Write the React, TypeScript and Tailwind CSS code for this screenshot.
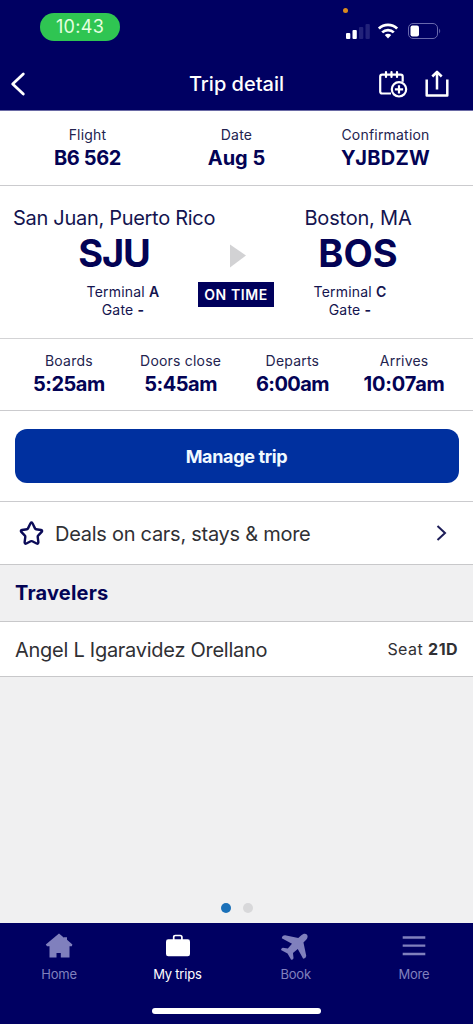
import React from 'react';

interface LabelledValue {
  label: string;
  value: string;
  valueClass: string;
}

const flightInfo: LabelledValue[] = [
  { label: 'Flight', value: 'B6 562', valueClass: 'tracking-[-0.4px]' },
  { label: 'Date', value: 'Aug 5', valueClass: 'tracking-[0px]' },
  { label: 'Confirmation', value: 'YJBDZW', valueClass: 'tracking-[0.3px]' },
];

const times: LabelledValue[] = [
  { label: 'Boards', value: '5:25am', valueClass: 'tracking-[-0.5px]' },
  { label: 'Doors close', value: '5:45am', valueClass: 'tracking-[-0.5px]' },
  { label: 'Departs', value: '6:00am', valueClass: 'tracking-[-0.6px]' },
  { label: 'Arrives', value: '10:07am', valueClass: 'tracking-[-0.2px]' },
];

const HomeIcon = () => (
  <svg width="28" height="26" viewBox="0 0 28 26" fill="currentColor">
    <path d="M14 .5 .8 11.500 2 13.200h2.500v11.300H11.500V20h4.300v4.500h8.700V13.200h2.300l.6-1.700L22 6.800V4.200h-3v.5z" />
  </svg>
);

const SuitcaseIcon = () => (
  <svg className="ml-px" width="28" height="26" viewBox="0 0 28 26">
    <path d="M9.700 7V4.200q0-1.700 1.700-1.700h4.800q1.700 0 1.700 1.700V7" fill="none" stroke="currentColor" strokeWidth="1.700" />
    <rect x="2" y="6.300" width="24" height="17" rx="2.300" fill="currentColor" />
  </svg>
);

const PlaneIcon = () => (
  <svg className="mr-[3px] mt-px" width="27" height="27" viewBox="0 0 28 28" fill="currentColor">
    <path d="M26.800 1.500c-1.700-1.400-4.200-.6-5.700.9l-3.200 2.900L4.200 2.300Q1.200 2.500.8 5.500l10.600 5.700-4.300 5-5.200-.9Q.2 15.500 0 17.500l6.800 3.700 3.700 6.600q2 0 2.500-1.700l-.6-5.400 5-4.200 5.600 10.300q2.700-.2 3.200-3L23.300 9.800l2.800-2.900c1.500-1.500 2.100-4 .7-5.400z" />
  </svg>
);

const MenuIcon = () => (
  <svg width="24" height="22" viewBox="0 0 24 22" stroke="currentColor" strokeWidth="2.300">
    <path d="M.7 2.500h22.600M.7 10.700h22.600M.7 19h22.600" />
  </svg>
);

const tabs = [
  { name: 'Home', icon: HomeIcon, active: false },
  { name: 'My trips', icon: SuitcaseIcon, active: true },
  { name: 'Book', icon: PlaneIcon, active: false },
  { name: 'More', icon: MenuIcon, active: false },
];

const StatusBar = () => (
  <div className="relative flex h-14 items-start justify-between pl-10 pr-8">
    <div className="mt-[13px] flex h-7 w-20 items-center justify-center rounded-full bg-[#2fc552] text-[18px] leading-7 tracking-[0.3px] text-[#e6ffe0]">
      10:43
    </div>
    <span className="absolute left-[343px] top-2 h-[5px] w-[5px] rounded-full bg-[#d98a1e]" />
    <div className="mt-[22px] flex items-center">
      <svg className="mr-2" width="25" height="18" viewBox="0 0 25 18">
        <rect x="1" y="11" width="4.300" height="6" rx="1" fill="#fff" />
        <rect x="7.500" y="8" width="4.300" height="9" rx="1" fill="#fff" />
        <rect x="14" y="5" width="4.300" height="12" rx="1" fill="#22227a" />
        <rect x="20.500" y="2" width="4.300" height="15" rx="1" fill="#22227a" />
      </svg>
      <svg className="mr-2.5" width="20" height="16" viewBox="0 0 20 16" fill="none" stroke="#fff" strokeWidth="2.700">
        <path d="M.9 5.600a13 13 0 0 1 18.200 0" />
        <path d="M4.200 9.400a8.300 8.300 0 0 1 11.600 0" />
        <path d="M10 15.400 6.800 12q3.200-2.600 6.400 0z" fill="#fff" stroke="none" />
      </svg>
      <svg width="33" height="16" viewBox="0 0 33 16">
        <rect x=".5" y=".5" width="29" height="15" rx="4.500" fill="none" stroke="#6868ac" />
        <rect x="2.500" y="2.500" width="8.500" height="11" rx="2" fill="#fff" />
        <path d="M31.200 5.500q2 2.500 0 5z" fill="#6868ac" />
      </svg>
    </div>
  </div>
);

const TitleBar = () => (
  <div className="grid h-[54px] grid-cols-[1fr_auto_1fr] items-center pl-2.5 pr-6 pt-px text-white">
    <svg width="16" height="24" viewBox="0 0 16 24" fill="none" stroke="currentColor" strokeWidth="2.800" strokeLinecap="round" strokeLinejoin="round">
      <path d="M13.300 2 2.700 12l10.600 10" />
    </svg>
    <h1 className="pl-3.5 pt-px text-[20px] font-medium leading-7">Trip detail</h1>
    <div className="flex items-center justify-end gap-[17px]">
      <svg width="30" height="28" viewBox="0 0 30 28" fill="none" stroke="currentColor" strokeWidth="2.200">
        <path d="M13 23.500H4.200q-2 0-2-2V6.700q0-2 2-2h18.500q2 0 2 2v5" />
        <path d="M8 2v5M13.500 2v5M19 2v5" strokeLinecap="round" />
        <circle cx="21" cy="19.300" r="7.200" />
        <path d="M21 15.200v8.200M16.900 19.300h8.200" />
      </svg>
      <svg width="24" height="28" viewBox="0 0 24 28" fill="none" stroke="currentColor" strokeWidth="2.500" strokeLinejoin="round">
        <path d="M1.700 9.500v16h20.600v-16" />
        <path d="M12 19.500V2M7.300 6.500 12 1.800l4.700 4.700" />
      </svg>
    </div>
  </div>
);

const InfoCell = ({ label, value, valueClass }: LabelledValue) => (
  <div className="flex-1 text-center">
    <p className="whitespace-nowrap text-[14px] leading-5 tracking-[0.2px] text-[#23234f]">{label}</p>
    <p className={`whitespace-nowrap pt-px text-[20px] font-bold leading-6 text-[#030355] ${valueClass}`}>{value}</p>
  </div>
);

const App: React.FC = () => {
  return (
    <div className="flex h-[1024px] w-[473px] flex-col overflow-hidden bg-[#f0f0f1] font-['Inter','Liberation_Sans',sans-serif]">
      <header className="h-[111px] shrink-0 border-b border-[#6a6aa5] bg-[#000062]">
        <StatusBar />
        <TitleBar />
      </header>

      {/* Flight summary */}
      <section className="flex h-[75px] shrink-0 border-b border-[#cbcbce] bg-white px-[13px] pt-[14px]">
        {flightInfo.map((item) => (
          <InfoCell key={item.label} {...item} />
        ))}
      </section>

      {/* Route */}
      <section className="grid h-[153px] shrink-0 grid-cols-[202px_42px_202px] border-b border-[#d3d3d5] bg-white pl-[13px] pt-[18px] text-[#14144f]">
        <div className="text-center">
          <p className="whitespace-nowrap text-[20px] leading-7 tracking-[-0.3px]">San Juan, Puerto Rico</p>
          <p className="text-[38px] font-bold leading-[42px] tracking-[-1.2px] text-[#030355]">SJU</p>
          <div className="ml-[18px] mt-[9px] text-[14px] leading-[17.5px] tracking-[0.2px]">
            <p>Terminal <b className="font-semibold">A</b></p>
            <p>Gate <b>-</b></p>
          </div>
        </div>
        <div className="flex flex-col items-center pt-10">
          <svg className="ml-1 shrink-0" width="18" height="24" viewBox="0 0 18 24" fill="#d2d2d4">
            <path d="M1 .5 17 11.500 1 23.500z" />
          </svg>
          <span className="mt-3.5 flex h-[25px] w-[76px] shrink-0 items-center justify-center whitespace-nowrap bg-[#00005c] text-[14px] font-semibold tracking-[0.6px] text-white">
            ON TIME
          </span>
        </div>
        <div className="text-center">
          <p className="whitespace-nowrap text-[20px] leading-7 tracking-[-0.2px]">Boston, MA</p>
          <p className="text-[38px] font-bold leading-[42px] text-[#030355]">BOS</p>
          <div className="mr-[16px] mt-[9px] text-[14px] leading-[17.5px] tracking-[0.2px]">
            <p>Terminal <b className="font-semibold">C</b></p>
            <p>Gate <b>-</b></p>
          </div>
        </div>
      </section>

      {/* Times */}
      <section className="flex h-[72px] shrink-0 border-b border-[#cbcbce] bg-white px-[13px] pt-3">
        {times.map((item) => (
          <InfoCell key={item.label} {...item} />
        ))}
      </section>

      <section className="h-[91px] shrink-0 border-b border-[#cbcbce] bg-white px-[14.5px] pt-[18px]">
        <button className="h-[54px] w-full rounded-xl bg-[#00309f] text-[18px] font-bold tracking-[-0.35px] text-[#f0faff]">
          Manage trip
        </button>
      </section>

      <a className="flex h-[63px] shrink-0 items-center border-b border-[#c8c8ca] bg-white pl-[19px] pr-[26px]">
        <svg width="25" height="25" viewBox="0 0 25 25" fill="none" stroke="#0b0b58" strokeWidth="2.400" strokeLinejoin="round">
          <path d="M11.500 2.300q1-1.500 2 0l2.600 5.300q.3.500.9.600l5 .8q1.800.5.700 1.900l-3.600 3.800q-.5.500-.4 1.200l.7 5.400q-.1 1.900-1.800 1.200l-4.300-2.200q-.8-.4-1.600 0l-4.300 2.200q-1.700.7-1.800-1.200l.7-5.400q.1-.7-.4-1.200l-3.600-3.800Q1.200 9.500 3 9l5-.8q.6-.1.900-.6z" />
        </svg>
        <span className="ml-[11px] flex-1 pt-px text-[20px] leading-7 tracking-[-0.27px] text-[#303034]">Deals on cars, stays &amp; more</span>
        <svg width="11" height="18" viewBox="0 0 11 18" fill="none" stroke="#1d1d58" strokeWidth="2">
          <path d="m1.500 2 7.500 7-7.500 7" />
        </svg>
      </a>

      <h2 className="flex h-[57px] shrink-0 items-center border-b border-[#c8c8ca] pl-[15px] text-[20px] font-bold tracking-[0.2px] text-[#030355]">
        Travelers
      </h2>
      <div className="flex h-[55px] shrink-0 items-center justify-between border-b border-[#c8c8ca] bg-white px-[15px] text-[#303034]">
        <span className="pt-0.5 text-[20px] tracking-[-0.27px]">Angel L Igaravidez Orellano</span>
        <span className="text-[16px] tracking-[0.45px]">Seat <b className="font-bold">21D</b></span>
      </div>

      {/* Page dots */}
      <div className="flex flex-1 items-end justify-center gap-3 pb-[10px]">
        <span className="h-[10px] w-[10px] rounded-full bg-[#1a70b8]" />
        <span className="h-[10px] w-[10px] rounded-full bg-[#d8d8da]" />
      </div>

      <nav className="h-[101px] shrink-0 bg-[#000062]">
        <div className="flex h-[85px]">
          {tabs.map((tab) => (
            <div
              key={tab.name}
              className={`flex flex-1 flex-col items-center pt-[9px] ${tab.active ? 'text-white' : 'text-[#8080bd]'}`}
            >
              <div className="flex h-7 items-center justify-center">
                <tab.icon />
              </div>
              <span className="mt-1 text-[13px] leading-5 tracking-[-0.2px]">{tab.name}</span>
            </div>
          ))}
        </div>
        <div className="mx-auto h-[6px] w-[169px] rounded-full bg-white" />
      </nav>
    </div>
  );
};

export default App;
